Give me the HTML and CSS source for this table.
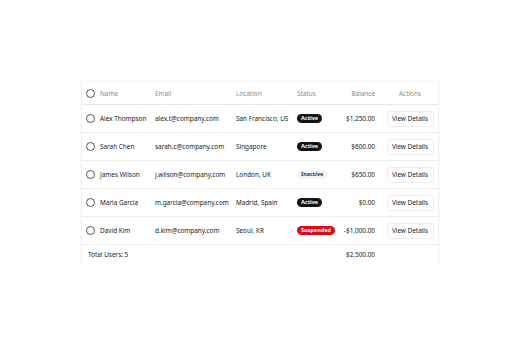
FILE: index.html
```html
<!DOCTYPE html>
<html>
<head>
<meta charset="utf-8">
<link rel="stylesheet" href="styles.css">
</head>
<body>
<div class="page">
  <div class="card">
    <table class="grid">
      <colgroup>
        <col class="c-check"><col class="c-name"><col class="c-email"><col class="c-loc"><col class="c-status"><col class="c-bal"><col class="c-act">
      </colgroup>
      <thead>
        <tr>
          <th><span class="radio"></span></th>
          <th>Name</th>
          <th>Email</th>
          <th>Location</th>
          <th>Status</th>
          <th class="num">Balance</th>
          <th class="center">Actions</th>
        </tr>
      </thead>
      <tbody>
        <tr>
          <td><span class="radio"></span></td>
          <td>Alex Thompson</td>
          <td>alex.t@company.com</td>
          <td>San Francisco, US</td>
          <td><span class="badge active">Active</span></td>
          <td class="num">$1,250.00</td>
          <td class="center"><button class="btn">View Details</button></td>
        </tr>
        <tr>
          <td><span class="radio"></span></td>
          <td>Sarah Chen</td>
          <td>sarah.c@company.com</td>
          <td>Singapore</td>
          <td><span class="badge active">Active</span></td>
          <td class="num">$600.00</td>
          <td class="center"><button class="btn">View Details</button></td>
        </tr>
        <tr>
          <td><span class="radio"></span></td>
          <td>James Wilson</td>
          <td>j.wilson@company.com</td>
          <td>London, UK</td>
          <td><span class="badge inactive">Inactive</span></td>
          <td class="num">$650.00</td>
          <td class="center"><button class="btn">View Details</button></td>
        </tr>
        <tr>
          <td><span class="radio"></span></td>
          <td>Maria Garcia</td>
          <td>m.garcia@company.com</td>
          <td>Madrid, Spain</td>
          <td><span class="badge active">Active</span></td>
          <td class="num">$0.00</td>
          <td class="center"><button class="btn">View Details</button></td>
        </tr>
        <tr>
          <td><span class="radio"></span></td>
          <td>David Kim</td>
          <td>d.kim@company.com</td>
          <td>Seoul, KR</td>
          <td><span class="badge suspended">Suspended</span></td>
          <td class="num">-$1,000.00</td>
          <td class="center"><button class="btn">View Details</button></td>
        </tr>
      </tbody>
      <tfoot>
        <tr>
          <td colspan="5" class="total">Total Users: 5</td>
          <td class="num">$2,500.00</td>
          <td></td>
        </tr>
      </tfoot>
    </table>
  </div>
</div>
</body>
</html>
```
FILE: styles.css
```css
html, body {
  margin: 0;
  padding: 0;
  background: #ffffff;
}
body {
  font-family: "Noto Sans", "Open Sans", sans-serif;
  color: #1a1a1a;
}
.page {
  padding: 82px 0 0 82px;
}
.card {
  width: 356px;
  background: #fff;
  border-radius: 3px;
  box-shadow: 0 0 4px rgba(0,0,0,0.10), 0 1px 2px rgba(0,0,0,0.05);
  overflow: hidden;
}
.grid {
  width: 100%;
  border-collapse: collapse;
  table-layout: fixed;
  font-size: 6.4px;
}
.c-check { width: 18px; }
.c-name { width: 55px; }
.c-email { width: 81px; }
.c-loc { width: 61px; }
.c-status { width: 46px; }
.c-bal { width: 39px; }
.c-act { width: 56px; }
th {
  height: 22px;
  font-weight: 400;
  color: #8a8a8a;
  text-align: left;
  padding: 0;
  border-bottom: 1px solid #e8e8e8;
}
td {
  height: 27px;
  padding: 0;
  border-bottom: 1px solid #efefef;
  white-space: nowrap;
}
th:first-child, td:first-child {
  text-align: right;
  padding-right: 5px;
}
th.num, td.num {
  text-align: right;
  padding-right: 7px;
}
.center { text-align: center; }
.radio {
  display: inline-block;
  width: 7px;
  height: 7px;
  border: 1px solid #555;
  border-radius: 50%;
  vertical-align: middle;
}
.badge {
  display: inline-block;
  height: 9px;
  line-height: 9px;
  padding: 0 4px;
  border-radius: 5px;
  font-size: 5.5px;
  font-weight: 700;
  vertical-align: middle;
}
.active { background: #141414; color: #fff; }
.inactive { background: #f2f2f2; color: #333; }
.suspended { background: #e30613; color: #fff; }
.btn {
  font-family: inherit;
  font-size: 6.4px;
  color: #222;
  background: #fff;
  border: 1px solid #ececec;
  border-radius: 3px;
  height: 16px;
  width: 47px;
  padding: 0;
  cursor: pointer;
}
tfoot td {
  height: 19px;
  border-bottom: none;
}
tfoot td.total {
  text-align: left;
  padding-left: 6px;
}
```
